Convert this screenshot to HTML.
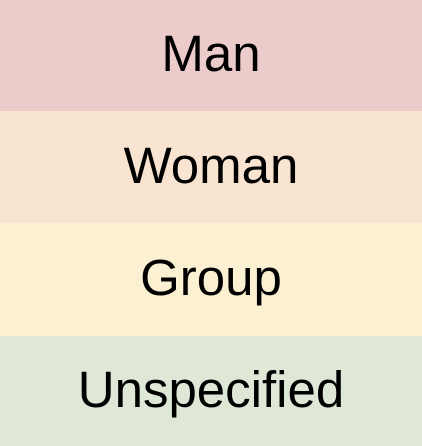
<!DOCTYPE html>
<html><head><style>
html,body{margin:0;padding:0;width:422px;height:446px;overflow:hidden}
.b{display:flex;align-items:center;justify-content:center;font-family:"Liberation Sans",sans-serif;font-size:51px;color:#000;box-sizing:border-box;padding-bottom:4px}
</style></head><body>
<div class="b" style="height:111px;background:#ecccca">Man</div>
<div class="b" style="height:112px;background:#f9e4d2">Woman</div>
<div class="b" style="height:113px;background:#fcf0d2">Group</div>
<div class="b" style="height:110px;background:#dfe8d7">Unspecified</div>
</body></html>
